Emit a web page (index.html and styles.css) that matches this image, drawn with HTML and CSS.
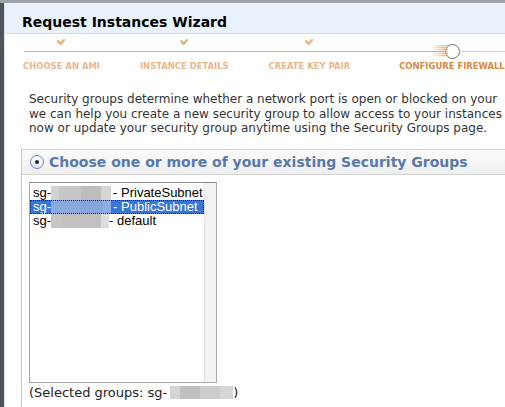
FILE: index.html
```html
<!DOCTYPE html>
<html>
<head>
<meta charset="utf-8">
<link rel="stylesheet" href="styles.css">
</head>
<body>
<div class="dialog">
  <div class="dialog-header"><h1 class="title">Request Instances Wizard</h1></div>
  <div class="steps">
    <div class="step done">
      <svg class="check" width="8" height="7" viewBox="0 0 8 7"><polyline points="1,2 3.6,5 7,1" fill="none" stroke="#e4ab72" stroke-width="2" stroke-linecap="round" stroke-linejoin="round"/></svg>
      <span class="label">CHOOSE AN AMI</span>
    </div>
    <div class="step done">
      <svg class="check" width="8" height="7" viewBox="0 0 8 7"><polyline points="1,2 3.6,5 7,1" fill="none" stroke="#e4ab72" stroke-width="2" stroke-linecap="round" stroke-linejoin="round"/></svg>
      <span class="label">INSTANCE DETAILS</span>
    </div>
    <div class="step done">
      <svg class="check" width="8" height="7" viewBox="0 0 8 7"><polyline points="1,2 3.6,5 7,1" fill="none" stroke="#e4ab72" stroke-width="2" stroke-linecap="round" stroke-linejoin="round"/></svg>
      <span class="label">CREATE KEY PAIR</span>
    </div>
    <div class="step current">
      <span class="dot"></span>
      <span class="label">CONFIGURE FIREWALL</span>
    </div>
  </div>
  <p class="intro">Security groups determine whether a network port is open or blocked on your<br>we can help you create a new security group to allow access to your instances<br>now or update your security group anytime using the Security Groups page.</p>
  <div class="group-box">
    <div class="group-head">
      <span class="radio"><span class="radio-dot"></span></span>
      <span class="group-title">Choose one or more of your existing Security Groups</span>
    </div>
    <div class="group-body">
      <div class="listbox">
        <div class="options">
          <div class="option">sg-<span class="blur b1"></span>- PrivateSubnet</div>
          <div class="option selected">sg-<span class="blur b2"></span>- PublicSubnet</div>
          <div class="option">sg-<span class="blur b3"></span>- default</div>
        </div>
        <div class="scrolltrack"></div>
      </div>
      <div class="summary">(Selected groups: sg-<span class="blur b4"></span>)</div>
    </div>
  </div>
</div>
</body>
</html>
```
FILE: styles.css
```css
html, body {
  margin: 0;
  padding: 0;
  height: 100%;
  overflow: hidden;
}
body {
  background: linear-gradient(to bottom, #9ea2a6 0, #9ea2a6 3px, #4e545a 3px);
  font-family: "DejaVu Sans", Verdana, sans-serif;
}
.dialog {
  margin: 3px 0 0 4px;
  width: 640px;
  height: 420px;
  background: #fff;
  border-left: 1px solid #dfe3e8;
}
.dialog-header {
  box-sizing: border-box;
  height: 31px;
  background: #e9f2fc;
  border-bottom: 1px solid #c9ddf3;
  display: flex;
  align-items: center;
  padding: 7px 0 0 17px;
}
.title {
  margin: 0;
  font-size: 14px;
  font-weight: bold;
  color: #000;
}
.steps {
  position: relative;
  display: flex;
  padding-left: 18px;
  height: 40px;
}
.steps::before {
  content: "";
  position: absolute;
  left: 19px;
  right: 0;
  top: 17px;
  height: 1px;
  background: #e5aa6c;
}
.step {
  display: flex;
  flex-direction: column;
  align-items: center;
  margin-right: 40px;
  position: relative;
}
.step:nth-child(3) {
  margin-right: 49px;
}
.check {
  display: block;
  margin-top: 5px;
  height: 7px;
  margin-bottom: 14px;
}
.dot {
  position: relative;
  display: block;
  box-sizing: border-box;
  width: 15px;
  height: 15px;
  margin-top: 10px;
  margin-bottom: 1px;
  margin-left: 2px;
  border: 1.5px solid #6b6b6b;
  border-radius: 50%;
  background: #fff;
  z-index: 1;
}
.dot::after {
  content: "";
  position: absolute;
  left: 13px;
  top: 6px;
  width: 200px;
  height: 1px;
  background: #cfcfcf;
}
.dot::before {
  content: "";
  position: absolute;
  right: 11px;
  top: 0px;
  width: 18px;
  height: 12px;
  background: repeating-linear-gradient(to bottom, rgba(236,160,85,0.75) 0 1px, rgba(248,205,160,0.5) 1px 2px);
  -webkit-mask: linear-gradient(to right, transparent, #000 80%);
  mask: linear-gradient(to right, transparent, #000 80%);
  border-radius: 6px 0 0 6px;
  z-index: -1;
}
.label {
  font-family: "DejaVu Sans Condensed", "DejaVu Sans", sans-serif;
  font-size: 9.4px;
  font-weight: bold;
  line-height: 12px;
  color: #eab78c;
  white-space: nowrap;
}
.current .label {
  color: #d9893d;
}
.intro {
  margin: 18px 0 0 24px;
  font-size: 12px;
  line-height: 14.5px;
  color: #333;
  white-space: nowrap;
}
.group-box {
  margin: 13px 0 0 16px;
  border-left: 1px solid #c9c9c9;
  border-top: 1px solid #d3d3d3;
  height: 300px;
}
.group-head {
  height: 24px;
  display: flex;
  align-items: center;
  padding-left: 8px;
  background: linear-gradient(to bottom, #fbfbfb, #eeeeee);
  border-bottom: 1px solid #d3d3d3;
}
.radio {
  box-sizing: border-box;
  width: 14px;
  height: 14px;
  border: 1px solid #6f87ad;
  border-radius: 50%;
  background: linear-gradient(to bottom, #ffffff, #dfe6f0);
  display: flex;
  align-items: center;
  justify-content: center;
  margin-right: 5px;
}
.radio-dot {
  width: 4px;
  height: 4px;
  border-radius: 50%;
  background: #1d2a3c;
}
.group-title {
  font-size: 14px;
  font-weight: bold;
  color: #5879ab;
  white-space: nowrap;
}
.group-body {
  padding: 7px 0 0 7px;
}
.listbox {
  display: flex;
  width: 188px;
  height: 201px;
  box-sizing: border-box;
  border: 1px solid #a9a9a9;
  border-top-color: #8e8e8e;
}
.options {
  flex: 1;
  padding-top: 3px;
}
.scrolltrack {
  width: 11px;
  background: #f3f3f3;
  border-left: 1px solid #e3e3e3;
}
.option {
  height: 14px;
  line-height: 14px;
  padding-left: 3px;
  font-family: "Liberation Sans", Arial, sans-serif;
  font-size: 13px;
  color: #000;
  white-space: pre;
  display: flex;
  align-items: center;
}
.option.selected {
  background: #3a76d6;
  color: #fff;
  outline: 1px dotted #0b2660;
  outline-offset: -1px;
}
.blur {
  display: inline-block;
  height: 14px;
}
.b1 {
  width: 60px;
  margin-right: 2px;
  background: linear-gradient(to right, #d2d2d2 0 8px, #c7c7c7 8px 30px, #bdbdbd 30px 50px, #d6d6d6 50px);
}
.b2 {
  width: 60px;
  margin-right: 2px;
  background: linear-gradient(to right, #8aa9dd 0 30px, #86a5da 30px 52px, #8fb0e2 52px);
}
.b3 {
  width: 58px;
  margin-right: 0px;
  background: linear-gradient(to right, #c9c5c3 0 10px, #c1c1c1 10px 50px, #dddddd 50px);
}
.summary {
  margin-top: 3px;
  font-size: 13px;
  line-height: 14px;
  color: #222;
  display: flex;
  align-items: center;
  white-space: nowrap;
}
.b4 {
  width: 63px;
  height: 13px;
  margin-left: 3px;
  background: linear-gradient(to right, #d4d4d4 0 10px, #c0c0c0 10px 30px, #cccccc 30px 50px, #d6d6d6 50px);
}
```
